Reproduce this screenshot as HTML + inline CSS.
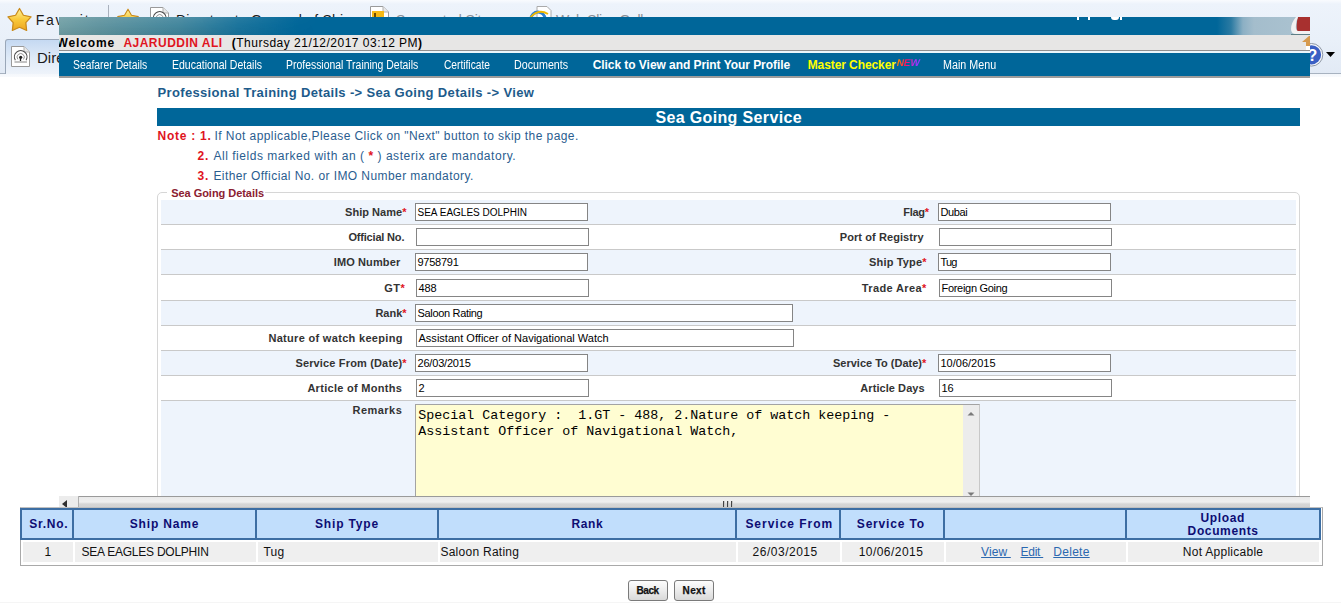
<!DOCTYPE html>
<html><head><meta charset="utf-8"><style>
html,body{margin:0;padding:0;}
body{width:1341px;height:603px;overflow:hidden;position:relative;background:#fff;font-family:"Liberation Sans",sans-serif;}
.b{position:absolute;}
.t{position:absolute;white-space:pre;line-height:20px;}
</style></head><body>
<div class="b" style="left:0px;top:0px;width:1341px;height:77px;background:linear-gradient(#f9fbfe,#edf3fb 4px,#e9f0f9 40px,#e2eaf5 73px,#f4f7fb 74px,#f8fafd 77px);"></div><div class="b" style="left:0px;top:73px;width:6px;height:1px;background:#a7b2c0;"></div><div class="b" style="left:1310px;top:73px;width:31px;height:1px;background:#a7b2c0;"></div><div class="b" style="left:5px;top:39px;width:120px;height:35px;border:1px solid #9aa7b8;border-bottom:none;border-radius:3px 3px 0 0;background:linear-gradient(#c5d9f2,#dfeaf7 18px,#eef3fa 34px);box-sizing:border-box;"></div><div class="b" style="left:108px;top:5px;width:1px;height:13px;background:#a9b1bd;"></div>
<svg class="b" style="left:6px;top:5.5px" width="27" height="27" viewBox="0 0 24 24"><defs><linearGradient id="sg1" x1="0" y1="0" x2="0" y2="1"><stop offset="0" stop-color="#fff3a0"/><stop offset="0.5" stop-color="#f9c93a"/><stop offset="1" stop-color="#eda521"/></linearGradient></defs><path d="M12.00 2.20 L15.47 8.23 L22.27 9.66 L17.61 14.82 L18.35 21.74 L12.00 18.90 L5.65 21.74 L6.39 14.82 L1.73 9.66 L8.53 8.23 Z" fill="url(#sg1)" stroke="#c98a1a" stroke-width="1.1" stroke-linejoin="round"/></svg><svg class="b" style="left:116px;top:7px" width="24" height="24" viewBox="0 0 24 24"><defs><linearGradient id="sg2" x1="0" y1="0" x2="0" y2="1"><stop offset="0" stop-color="#fff3a0"/><stop offset="0.5" stop-color="#f9c93a"/><stop offset="1" stop-color="#eda521"/></linearGradient></defs><path d="M12.00 2.20 L15.47 8.23 L22.27 9.66 L17.61 14.82 L18.35 21.74 L12.00 18.90 L5.65 21.74 L6.39 14.82 L1.73 9.66 L8.53 8.23 Z" fill="url(#sg2)" stroke="#c98a1a" stroke-width="1.1" stroke-linejoin="round"/></svg><svg class="b" style="left:10px;top:44.5px" width="21" height="23" viewBox="0 0 21 23"><path d="M1.5 1.5 H14 L19.5 7 V21.5 H1.5 Z" fill="#fff" stroke="#9a9a9a"/><path d="M14 1.5 V7 H19.5" fill="#e8e8e8" stroke="#b0b0b0"/><path d="M5.3 15.2 A6.3 6.3 0 1 1 16.1 15.2" fill="none" stroke="#4a4a4a" stroke-width="1.1"/><path d="M7.9 14.4 A3.6 3.6 0 1 1 13.5 14.4" fill="none" stroke="#888" stroke-width="0.9"/><circle cx="10.7" cy="12.3" r="1.6" fill="#222"/><path d="M10.5 13 V16" stroke="#222" stroke-width="1.3"/><path d="M4.5 17 H17" stroke="#777" stroke-width="0.9"/></svg><svg class="b" style="left:149px;top:6px" width="21" height="23" viewBox="0 0 21 23"><path d="M1.5 1.5 H14 L19.5 7 V21.5 H1.5 Z" fill="#fff" stroke="#9a9a9a"/><path d="M14 1.5 V7 H19.5" fill="#e8e8e8" stroke="#b0b0b0"/><path d="M5.3 15.2 A6.3 6.3 0 1 1 16.1 15.2" fill="none" stroke="#4a4a4a" stroke-width="1.1"/><path d="M7.9 14.4 A3.6 3.6 0 1 1 13.5 14.4" fill="none" stroke="#888" stroke-width="0.9"/><circle cx="10.7" cy="12.3" r="1.6" fill="#222"/><path d="M10.5 13 V16" stroke="#222" stroke-width="1.3"/><path d="M4.5 17 H17" stroke="#777" stroke-width="0.9"/></svg><svg class="b" style="left:369px;top:5px" width="21" height="23" viewBox="0 0 21 23"><path d="M1.5 1.5 H14 L19.5 7 V21.5 H1.5 Z" fill="#fff" stroke="#9a9a9a"/><path d="M14 1.5 V7 H19.5" fill="#e8e8e8" stroke="#b0b0b0"/><rect x="3" y="6" width="12" height="11" fill="#f5b915"/><rect x="5" y="8" width="2" height="7" fill="#6b4a00"/></svg><svg class="b" style="left:528px;top:5px" width="26" height="22" viewBox="0 0 26 22"><path d="M9 1.5 H19 L23 5.5 V14 H9 Z" fill="#fff" stroke="#aaa"/><circle cx="10" cy="14" r="7" fill="none" stroke="#2d7fd3" stroke-width="3"/><path d="M2 13 Q10 3 20 9" fill="none" stroke="#f0b800" stroke-width="2"/></svg><svg class="b" style="left:1299px;top:42px" width="26" height="26" viewBox="0 0 26 26"><circle cx="12.5" cy="12.8" r="11.3" fill="#f4f6fa" stroke="#8c96a4" stroke-width="1"/><circle cx="12.5" cy="12.8" r="9.6" fill="#3a5fc4"/><text x="8.5" y="19" font-family="Liberation Sans" font-weight="bold" font-size="16" fill="#fff">?</text></svg><svg class="b" style="left:1326px;top:52px" width="10" height="6" viewBox="0 0 10 6"><path d="M0 0 H9 L4.5 5 Z" fill="#000"/></svg>
<div class="t" style="left:35.70px;top:10px;font-size:14px;font-family:'Liberation Sans', sans-serif;letter-spacing:1.678px;"><span style="color:#1b1b1b;">Favorites</span></div>
<div class="t" style="left:176.00px;top:10px;font-size:14px;font-family:'Liberation Sans', sans-serif;letter-spacing:0.210px;"><span style="color:#1b1b1b;">Directorate General of Shi</span></div>
<div class="t" style="left:396.00px;top:10px;font-size:14px;font-family:'Liberation Sans', sans-serif;letter-spacing:-0.140px;"><span style="color:#8a8f96;">Suggested Sites</span></div>
<div class="t" style="left:556.00px;top:10px;font-size:14px;font-family:'Liberation Sans', sans-serif;letter-spacing:-0.313px;"><span style="color:#8a8f96;">Web Slice Gallery</span></div>
<div class="t" style="left:37.00px;top:48px;font-size:15px;font-family:'Liberation Sans', sans-serif;letter-spacing:0.000px;"><span style="color:#1b1b1b;">Directorate</span></div>
<div class="b" style="left:157px;top:108px;width:1143px;height:18px;background:#006699;"></div><div class="b" style="left:157px;top:192px;width:1143px;height:320px;border:1px solid #d6d6d6;border-radius:5px;box-sizing:border-box;"></div><div class="b" style="left:167px;top:186px;width:98px;height:12px;background:#fff;"></div><div class="b" style="left:161px;top:200px;width:1135px;height:24px;background:#eef4fc;"></div><div class="b" style="left:161px;top:225px;width:1135px;height:24px;background:#ffffff;"></div><div class="b" style="left:161px;top:250px;width:1135px;height:24px;background:#eef4fc;"></div><div class="b" style="left:161px;top:275px;width:1135px;height:25px;background:#ffffff;"></div><div class="b" style="left:161px;top:301px;width:1135px;height:24px;background:#eef4fc;"></div><div class="b" style="left:161px;top:326px;width:1135px;height:24px;background:#ffffff;"></div><div class="b" style="left:161px;top:351px;width:1135px;height:24px;background:#eef4fc;"></div><div class="b" style="left:161px;top:376px;width:1135px;height:24px;background:#ffffff;"></div><div class="b" style="left:161px;top:401px;width:1135px;height:95px;background:#eef4fc;"></div><div class="b" style="left:161px;top:224px;width:1135px;height:1px;background:#c9c9c9;"></div><div class="b" style="left:161px;top:249px;width:1135px;height:1px;background:#c9c9c9;"></div><div class="b" style="left:161px;top:274px;width:1135px;height:1px;background:#c9c9c9;"></div><div class="b" style="left:161px;top:300px;width:1135px;height:1px;background:#c9c9c9;"></div><div class="b" style="left:161px;top:325px;width:1135px;height:1px;background:#c9c9c9;"></div><div class="b" style="left:161px;top:350px;width:1135px;height:1px;background:#c9c9c9;"></div><div class="b" style="left:161px;top:375px;width:1135px;height:1px;background:#c9c9c9;"></div><div class="b" style="left:161px;top:400px;width:1135px;height:1px;background:#c9c9c9;"></div><div class="b" style="left:415px;top:203px;width:173px;height:18px;border:1px solid #858585;background:#fff;box-sizing:border-box;"></div><div class="b" style="left:416px;top:228px;width:173px;height:18px;border:1px solid #858585;background:#fff;box-sizing:border-box;"></div><div class="b" style="left:415px;top:253px;width:173px;height:18px;border:1px solid #858585;background:#fff;box-sizing:border-box;"></div><div class="b" style="left:416px;top:279px;width:173px;height:18px;border:1px solid #858585;background:#fff;box-sizing:border-box;"></div><div class="b" style="left:415px;top:304px;width:378px;height:18px;border:1px solid #858585;background:#fff;box-sizing:border-box;"></div><div class="b" style="left:416px;top:329px;width:378px;height:18px;border:1px solid #858585;background:#fff;box-sizing:border-box;"></div><div class="b" style="left:415px;top:354px;width:173px;height:18px;border:1px solid #858585;background:#fff;box-sizing:border-box;"></div><div class="b" style="left:416px;top:379px;width:173px;height:18px;border:1px solid #858585;background:#fff;box-sizing:border-box;"></div><div class="b" style="left:938px;top:203px;width:173px;height:18px;border:1px solid #858585;background:#fff;box-sizing:border-box;"></div><div class="b" style="left:939px;top:228px;width:173px;height:18px;border:1px solid #858585;background:#fff;box-sizing:border-box;"></div><div class="b" style="left:938px;top:253px;width:173px;height:18px;border:1px solid #858585;background:#fff;box-sizing:border-box;"></div><div class="b" style="left:939px;top:279px;width:173px;height:18px;border:1px solid #858585;background:#fff;box-sizing:border-box;"></div><div class="b" style="left:938px;top:354px;width:173px;height:18px;border:1px solid #858585;background:#fff;box-sizing:border-box;"></div><div class="b" style="left:939px;top:379px;width:173px;height:18px;border:1px solid #858585;background:#fff;box-sizing:border-box;"></div><div class="b" style="left:415px;top:404px;width:565px;height:100px;border:1px solid #a3a3a3;border-right-color:#c8c8c8;background:#fffdd2;box-sizing:border-box;"></div><div class="b" style="left:963px;top:405px;width:16px;height:98px;background:#ececec;"></div><svg class="b" style="left:967px;top:411px" width="8" height="5" viewBox="0 0 8 5"><path d="M0.5 4.5 L4 1 L7.5 4.5 Z" fill="#7a7a7a"/></svg><svg class="b" style="left:967px;top:492px" width="8" height="5" viewBox="0 0 8 5"><path d="M0.5 0.5 L4 4 L7.5 0.5 Z" fill="#7a7a7a"/></svg><div class="b" style="left:59px;top:496px;width:1251px;height:12px;background:linear-gradient(#e8e8e8,#f0f0f0 6px,#d6d6d6 8px,#d2d2d2);"></div><div class="b" style="left:59px;top:496px;width:19px;height:12px;background:#ececec;"></div><div class="b" style="left:78px;top:496px;width:1232px;height:1px;background:#9a9a9a;"></div><div class="b" style="left:78px;top:496px;width:1px;height:12px;background:#b0b0b0;"></div><svg class="b" style="left:62px;top:500px" width="6" height="8" viewBox="0 0 6 8"><path d="M5 0 V8 L0 4 Z" fill="#303030"/></svg><div class="b" style="left:723px;top:501px;width:11px;height:7px;background:repeating-linear-gradient(90deg,#444 0 1px,#c8c8c8 1px 2px,transparent 2px 4px);"></div><div class="b" style="left:0px;top:602px;width:1341px;height:1px;background:#f5f5f5;"></div><div class="b" style="left:20px;top:507px;width:1303px;height:59px;border:1px solid #a9a9a9;border-top-color:#c0c0c0;box-sizing:border-box;background:#fff;"></div><div class="b" style="left:20px;top:508px;width:1301px;height:32px;background:#c1defc;border:2px solid #3d6ea3;border-top-width:2px;box-sizing:border-box;"></div><div class="b" style="left:72px;top:508px;width:2px;height:32px;background:#3d6ea3;"></div><div class="b" style="left:255px;top:508px;width:2px;height:32px;background:#3d6ea3;"></div><div class="b" style="left:437px;top:508px;width:2px;height:32px;background:#3d6ea3;"></div><div class="b" style="left:735px;top:508px;width:2px;height:32px;background:#3d6ea3;"></div><div class="b" style="left:839px;top:508px;width:2px;height:32px;background:#3d6ea3;"></div><div class="b" style="left:943px;top:508px;width:2px;height:32px;background:#3d6ea3;"></div><div class="b" style="left:1125px;top:508px;width:2px;height:32px;background:#3d6ea3;"></div><div class="b" style="left:23px;top:542px;width:50px;height:20px;background:#efefef;"></div><div class="b" style="left:75px;top:542px;width:181px;height:20px;background:#efefef;"></div><div class="b" style="left:258px;top:542px;width:180px;height:20px;background:#efefef;"></div><div class="b" style="left:440px;top:542px;width:296px;height:20px;background:#efefef;"></div><div class="b" style="left:738px;top:542px;width:102px;height:20px;background:#efefef;"></div><div class="b" style="left:842px;top:542px;width:102px;height:20px;background:#efefef;"></div><div class="b" style="left:946px;top:542px;width:180px;height:20px;background:#efefef;"></div><div class="b" style="left:1128px;top:542px;width:191px;height:20px;background:#efefef;"></div><div class="b" style="left:628px;top:580px;width:40px;height:21px;border:1px solid #7a7a7a;border-radius:3px;box-sizing:border-box;background:linear-gradient(#fdfdfd,#ececec 50%,#d9d9d9);"></div><div class="b" style="left:674px;top:580px;width:40px;height:21px;border:1px solid #7a7a7a;border-radius:3px;box-sizing:border-box;background:linear-gradient(#fdfdfd,#ececec 50%,#d9d9d9);"></div>
<div class="b" style="left:59px;top:17px;width:1251px;height:18px;background:linear-gradient(90deg,#6f9ea4 0px,#5e939e 40px,#3f849b 120px,#17729b 180px,#006699 240px,#006699 1158px,#2b7aa2 1172px,#8cb0c4 1184px,#a4bdcc 1195px,#a9c1cf 1231px);"></div><svg class="b" style="left:1288px;top:17px" width="22" height="18" viewBox="0 0 22 18"><path d="M10 0 H22 V14 H9 Q8 6 10 0 Z" fill="#a8302f"/><path d="M8 0 Q3 6 3 12 Q3 17 8 17 H22 V14 H10 Q7 13 8 8 Q8 4 10 0 Z" fill="#f2f2f2"/><path d="M3 17.5 H22" stroke="#5f7f86" stroke-width="1"/></svg><div class="b" style="left:59px;top:17px;width:260px;height:18px;background:linear-gradient(rgba(255,255,255,0.10),rgba(255,255,255,0.03) 8px,rgba(0,0,0,0.05));-webkit-mask-image:linear-gradient(90deg,#000 0,#000 140px,transparent 260px);mask-image:linear-gradient(90deg,#000 0,#000 140px,transparent 260px);"></div><div class="b" style="left:59px;top:35px;width:1251px;height:15px;background:#e7e6e5;"></div><div class="b" style="left:59px;top:50px;width:1251px;height:1px;background:#8f8f8f;"></div><div class="b" style="left:59px;top:51px;width:1251px;height:2px;background:#eaf6fb;"></div><div class="b" style="left:59px;top:53px;width:1251px;height:23px;background:#006699;"></div><div class="b" style="left:59px;top:76px;width:1251px;height:2px;background:#9c9c9c;"></div><svg class="b" style="left:1302px;top:36px" width="8" height="15" viewBox="0 0 8 15"><path d="M0 6 L7 0 H8 V10 H4 V6 Z" fill="#d69a4e"/><rect x="4" y="10" width="4" height="4" fill="#fff"/></svg><div class="b" style="left:1077px;top:17px;width:2px;height:3px;background:#fff;"></div><div class="b" style="left:1088px;top:17px;width:2px;height:3px;background:#fff;"></div><div class="b" style="left:1111px;top:17px;width:8px;height:3px;border-radius:0 0 4px 4px;background:#fff;"></div><div class="b" style="left:1120px;top:17px;width:2px;height:3px;background:#fff;"></div><div class="b" style="left:897px;top:58px;width:26px;height:10px;font:bold 10px/10px 'Liberation Sans';letter-spacing:-0.3px;transform:skewX(-12deg);background:linear-gradient(90deg,#ff8c00,#ff1060 35%,#b030ff 70%,#7a40ff);-webkit-background-clip:text;background-clip:text;color:transparent;">NEW</div>
<div class="t" style="left:56.50px;top:33px;font-size:12px;font-family:'Liberation Sans', sans-serif;letter-spacing:0.868px;clip-path:inset(0 0 0 2.5px);"><span style="color:#000;font-weight:bold;">Welcome</span></div>
<div class="t" style="left:123.40px;top:33px;font-size:12px;font-family:'Liberation Sans', sans-serif;letter-spacing:0.492px;"><span style="color:#e0141e;font-weight:bold;">AJARUDDIN ALI</span></div>
<div class="t" style="left:231.80px;top:33px;font-size:12px;font-family:'Liberation Sans', sans-serif;letter-spacing:0.489px;"><span style="color:#000;font-weight:bold;">(</span><span style="color:#000;">Thursday 21/12/2017 03:12 PM</span><span style="color:#000;font-weight:bold;">)</span></div>
<div class="t" style="left:72.70px;top:55px;font-size:12px;font-family:'Liberation Sans', sans-serif;letter-spacing:0.000px;transform:scaleX(0.8636);transform-origin:0 0;"><span style="color:#ffffff;">Seafarer Details</span></div>
<div class="t" style="left:171.60px;top:55px;font-size:12px;font-family:'Liberation Sans', sans-serif;letter-spacing:0.000px;transform:scaleX(0.8761);transform-origin:0 0;"><span style="color:#ffffff;">Educational Details</span></div>
<div class="t" style="left:286.40px;top:55px;font-size:12px;font-family:'Liberation Sans', sans-serif;letter-spacing:0.000px;transform:scaleX(0.8694);transform-origin:0 0;"><span style="color:#ffffff;">Professional Training Details</span></div>
<div class="t" style="left:443.90px;top:55px;font-size:12px;font-family:'Liberation Sans', sans-serif;letter-spacing:0.000px;transform:scaleX(0.8501);transform-origin:0 0;"><span style="color:#ffffff;">Certificate</span></div>
<div class="t" style="left:514.30px;top:55px;font-size:12px;font-family:'Liberation Sans', sans-serif;letter-spacing:0.000px;transform:scaleX(0.8914);transform-origin:0 0;"><span style="color:#ffffff;">Documents</span></div>
<div class="t" style="left:592.70px;top:55px;font-size:12px;font-family:'Liberation Sans', sans-serif;letter-spacing:-0.055px;"><span style="color:#ffffff;font-weight:bold;">Click to View and Print Your Profile</span></div>
<div class="t" style="left:807.70px;top:55px;font-size:12px;font-family:'Liberation Sans', sans-serif;letter-spacing:-0.085px;"><span style="color:#ffff00;font-weight:bold;">Master Checker</span></div>
<div class="t" style="left:942.60px;top:55px;font-size:12px;font-family:'Liberation Sans', sans-serif;letter-spacing:0.000px;transform:scaleX(0.8946);transform-origin:0 0;"><span style="color:#ffffff;">Main Menu</span></div>
<div class="t" style="left:157.50px;top:83px;font-size:13px;font-family:'Liberation Sans', sans-serif;letter-spacing:0.345px;"><span style="color:#1d5b8b;font-weight:bold;">Professional Training Details -&gt; Sea Going Details -&gt; View</span></div>
<div class="t" style="left:655.40px;top:108px;font-size:16px;font-family:'Liberation Sans', sans-serif;letter-spacing:0.356px;"><span style="color:#ffffff;font-weight:bold;">Sea Going Service</span></div>
<div class="t" style="left:157.50px;top:126px;font-size:12px;font-family:'Liberation Sans', sans-serif;letter-spacing:0.737px;"><span style="color:#e0141e;font-weight:bold;">Note : 1.</span></div>
<div class="t" style="left:214.60px;top:126px;font-size:12px;font-family:'Liberation Sans', sans-serif;letter-spacing:0.421px;"><span style="color:#2a5d8f;">If Not applicable,Please Click on "Next" button to skip the page.</span></div>
<div class="t" style="left:197.40px;top:146px;font-size:12px;font-family:'Liberation Sans', sans-serif;letter-spacing:0.926px;"><span style="color:#e0141e;font-weight:bold;">2.</span></div>
<div class="t" style="left:213.40px;top:146px;font-size:12px;font-family:'Liberation Sans', sans-serif;letter-spacing:0.535px;"><span style="color:#2a5d8f;">All fields marked with an ( </span><span style="color:#e0141e;font-weight:bold;">*</span><span style="color:#2a5d8f;"> ) asterix are mandatory.</span></div>
<div class="t" style="left:197.40px;top:166px;font-size:12px;font-family:'Liberation Sans', sans-serif;letter-spacing:0.926px;"><span style="color:#e0141e;font-weight:bold;">3.</span></div>
<div class="t" style="left:213.40px;top:166px;font-size:12px;font-family:'Liberation Sans', sans-serif;letter-spacing:0.426px;"><span style="color:#2a5d8f;">Either Official No. or IMO Number mandatory.</span></div>
<div class="t" style="left:171.20px;top:183px;font-size:11px;font-family:'Liberation Sans', sans-serif;letter-spacing:-0.038px;"><span style="color:#8b2030;font-weight:bold;">Sea Going Details</span></div>
<div class="t" style="left:345.00px;top:202px;font-size:11px;font-family:'Liberation Sans', sans-serif;letter-spacing:0.039px;"><span style="color:#333333;font-weight:bold;">Ship Name</span><span style="color:#e0141e;font-weight:bold;">*</span></div>
<div class="t" style="left:348.40px;top:227px;font-size:11px;font-family:'Liberation Sans', sans-serif;letter-spacing:-0.182px;"><span style="color:#333333;font-weight:bold;">Official No.</span></div>
<div class="t" style="left:333.80px;top:252px;font-size:11px;font-family:'Liberation Sans', sans-serif;letter-spacing:0.110px;"><span style="color:#333333;font-weight:bold;">IMO Number</span></div>
<div class="t" style="left:384.20px;top:278px;font-size:11px;font-family:'Liberation Sans', sans-serif;letter-spacing:0.462px;"><span style="color:#333333;font-weight:bold;">GT</span><span style="color:#e0141e;font-weight:bold;">*</span></div>
<div class="t" style="left:375.40px;top:303px;font-size:11px;font-family:'Liberation Sans', sans-serif;letter-spacing:0.000px;"><span style="color:#333333;font-weight:bold;">Rank</span><span style="color:#e0141e;font-weight:bold;">*</span></div>
<div class="t" style="left:268.40px;top:328px;font-size:11px;font-family:'Liberation Sans', sans-serif;letter-spacing:0.313px;"><span style="color:#333333;font-weight:bold;">Nature of watch keeping</span></div>
<div class="t" style="left:295.40px;top:353px;font-size:11px;font-family:'Liberation Sans', sans-serif;letter-spacing:0.157px;"><span style="color:#333333;font-weight:bold;">Service From (Date)</span><span style="color:#e0141e;font-weight:bold;">*</span></div>
<div class="t" style="left:307.40px;top:378px;font-size:11px;font-family:'Liberation Sans', sans-serif;letter-spacing:0.287px;"><span style="color:#333333;font-weight:bold;">Article of Months</span></div>
<div class="t" style="left:352.50px;top:400px;font-size:11px;font-family:'Liberation Sans', sans-serif;letter-spacing:0.474px;"><span style="color:#333333;font-weight:bold;">Remarks</span></div>
<div class="t" style="left:903.30px;top:202px;font-size:11px;font-family:'Liberation Sans', sans-serif;letter-spacing:-0.278px;"><span style="color:#333333;font-weight:bold;">Flag</span><span style="color:#e0141e;font-weight:bold;">*</span></div>
<div class="t" style="left:839.80px;top:227px;font-size:11px;font-family:'Liberation Sans', sans-serif;letter-spacing:0.080px;"><span style="color:#333333;font-weight:bold;">Port of Registry</span></div>
<div class="t" style="left:869.00px;top:252px;font-size:11px;font-family:'Liberation Sans', sans-serif;letter-spacing:0.173px;"><span style="color:#333333;font-weight:bold;">Ship Type</span><span style="color:#e0141e;font-weight:bold;">*</span></div>
<div class="t" style="left:861.80px;top:278px;font-size:11px;font-family:'Liberation Sans', sans-serif;letter-spacing:0.364px;"><span style="color:#333333;font-weight:bold;">Trade Area</span><span style="color:#e0141e;font-weight:bold;">*</span></div>
<div class="t" style="left:833.00px;top:353px;font-size:11px;font-family:'Liberation Sans', sans-serif;letter-spacing:-0.003px;"><span style="color:#333333;font-weight:bold;">Service To (Date)</span><span style="color:#e0141e;font-weight:bold;">*</span></div>
<div class="t" style="left:860.30px;top:378px;font-size:11px;font-family:'Liberation Sans', sans-serif;letter-spacing:0.066px;"><span style="color:#333333;font-weight:bold;">Article Days</span></div>
<div class="t" style="left:417.50px;top:203px;font-size:10px;font-family:'Liberation Sans', sans-serif;letter-spacing:-0.001px;"><span style="color:#000;">SEA EAGLES DOLPHIN</span></div>
<div class="t" style="left:417.50px;top:252px;font-size:11px;font-family:'Liberation Sans', sans-serif;letter-spacing:-0.251px;"><span style="color:#000;">9758791</span></div>
<div class="t" style="left:418.50px;top:278px;font-size:11px;font-family:'Liberation Sans', sans-serif;letter-spacing:-0.168px;"><span style="color:#000;">488</span></div>
<div class="t" style="left:417.50px;top:303px;font-size:11px;font-family:'Liberation Sans', sans-serif;letter-spacing:-0.324px;"><span style="color:#000;">Saloon Rating</span></div>
<div class="t" style="left:418.50px;top:328px;font-size:11px;font-family:'Liberation Sans', sans-serif;letter-spacing:0.018px;"><span style="color:#000;">Assistant Officer of Navigational Watch</span></div>
<div class="t" style="left:417.50px;top:353px;font-size:11px;font-family:'Liberation Sans', sans-serif;letter-spacing:-0.193px;"><span style="color:#000;">26/03/2015</span></div>
<div class="t" style="left:418.50px;top:378px;font-size:11px;font-family:'Liberation Sans', sans-serif;letter-spacing:0.000px;"><span style="color:#000;">2</span></div>
<div class="t" style="left:940.50px;top:202px;font-size:11px;font-family:'Liberation Sans', sans-serif;letter-spacing:-0.374px;"><span style="color:#000;">Dubai</span></div>
<div class="t" style="left:940.50px;top:252px;font-size:11px;font-family:'Liberation Sans', sans-serif;letter-spacing:-0.864px;"><span style="color:#000;">Tug</span></div>
<div class="t" style="left:941.50px;top:278px;font-size:11px;font-family:'Liberation Sans', sans-serif;letter-spacing:-0.299px;"><span style="color:#000;">Foreign Going</span></div>
<div class="t" style="left:940.50px;top:353px;font-size:11px;font-family:'Liberation Sans', sans-serif;letter-spacing:0.000px;"><span style="color:#000;">10/06/2015</span></div>
<div class="t" style="left:941.50px;top:378px;font-size:11px;font-family:'Liberation Sans', sans-serif;letter-spacing:0.000px;"><span style="color:#000;">16</span></div>
<div class="t" style="left:418.30px;top:406px;font-size:13.33px;font-family:'Liberation Mono', monospace;letter-spacing:0.000px;"><span style="color:#000;">Special Category :  1.GT - 488, 2.Nature of watch keeping -</span></div>
<div class="t" style="left:418.30px;top:422px;font-size:13.33px;font-family:'Liberation Mono', monospace;letter-spacing:0.000px;"><span style="color:#000;">Assistant Officer of Navigational Watch,</span></div>
<div class="t" style="left:29.20px;top:514px;font-size:12px;font-family:'Liberation Sans', sans-serif;letter-spacing:0.732px;"><span style="color:#0d0d73;font-weight:bold;">Sr.No.</span></div>
<div class="t" style="left:129.80px;top:514px;font-size:12px;font-family:'Liberation Sans', sans-serif;letter-spacing:0.820px;"><span style="color:#0d0d73;font-weight:bold;">Ship Name</span></div>
<div class="t" style="left:315.00px;top:514px;font-size:12px;font-family:'Liberation Sans', sans-serif;letter-spacing:0.828px;"><span style="color:#0d0d73;font-weight:bold;">Ship Type</span></div>
<div class="t" style="left:571.50px;top:514px;font-size:12px;font-family:'Liberation Sans', sans-serif;letter-spacing:0.577px;"><span style="color:#0d0d73;font-weight:bold;">Rank</span></div>
<div class="t" style="left:745.40px;top:514px;font-size:12px;font-family:'Liberation Sans', sans-serif;letter-spacing:0.976px;"><span style="color:#0d0d73;font-weight:bold;">Service From</span></div>
<div class="t" style="left:856.80px;top:514px;font-size:12px;font-family:'Liberation Sans', sans-serif;letter-spacing:0.825px;"><span style="color:#0d0d73;font-weight:bold;">Service To</span></div>
<div class="t" style="left:1200.50px;top:508px;font-size:12px;font-family:'Liberation Sans', sans-serif;letter-spacing:0.633px;"><span style="color:#0d0d73;font-weight:bold;">Upload</span></div>
<div class="t" style="left:1187.60px;top:521px;font-size:12px;font-family:'Liberation Sans', sans-serif;letter-spacing:0.629px;"><span style="color:#0d0d73;font-weight:bold;">Documents</span></div>
<div class="t" style="left:44.50px;top:542px;font-size:12px;font-family:'Liberation Sans', sans-serif;letter-spacing:0.000px;"><span style="color:#111111;">1</span></div>
<div class="t" style="left:81.50px;top:542px;font-size:12px;font-family:'Liberation Sans', sans-serif;letter-spacing:-0.240px;"><span style="color:#111111;">SEA EAGLES DOLPHIN</span></div>
<div class="t" style="left:263.40px;top:542px;font-size:12px;font-family:'Liberation Sans', sans-serif;letter-spacing:0.221px;"><span style="color:#111111;">Tug</span></div>
<div class="t" style="left:440.40px;top:542px;font-size:12px;font-family:'Liberation Sans', sans-serif;letter-spacing:0.266px;"><span style="color:#111111;">Saloon Rating</span></div>
<div class="t" style="left:752.60px;top:542px;font-size:12px;font-family:'Liberation Sans', sans-serif;letter-spacing:0.502px;"><span style="color:#111111;">26/03/2015</span></div>
<div class="t" style="left:858.70px;top:542px;font-size:12px;font-family:'Liberation Sans', sans-serif;letter-spacing:0.457px;"><span style="color:#111111;">10/06/2015</span></div>
<div class="t" style="left:981.10px;top:542px;font-size:12px;font-family:'Liberation Sans', sans-serif;letter-spacing:0.118px;"><span style="color:#2b68b0;text-decoration:underline;">View </span></div>
<div class="t" style="left:1020.50px;top:542px;font-size:12px;font-family:'Liberation Sans', sans-serif;letter-spacing:-0.261px;"><span style="color:#2b68b0;text-decoration:underline;">Edit </span></div>
<div class="t" style="left:1053.30px;top:542px;font-size:12px;font-family:'Liberation Sans', sans-serif;letter-spacing:0.277px;"><span style="color:#2b68b0;text-decoration:underline;">Delete</span></div>
<div class="t" style="left:1182.80px;top:542px;font-size:12px;font-family:'Liberation Sans', sans-serif;letter-spacing:0.269px;"><span style="color:#111111;">Not Applicable</span></div>
<div class="t" style="left:636.40px;top:581px;font-size:10px;font-family:'Liberation Sans', sans-serif;letter-spacing:-0.382px;-webkit-text-stroke:0.25px #111;"><span style="color:#111;font-weight:bold;">Back</span></div>
<div class="t" style="left:682.60px;top:581px;font-size:10px;font-family:'Liberation Sans', sans-serif;letter-spacing:0.318px;-webkit-text-stroke:0.25px #111;"><span style="color:#111;font-weight:bold;">Next</span></div>
</body></html>
